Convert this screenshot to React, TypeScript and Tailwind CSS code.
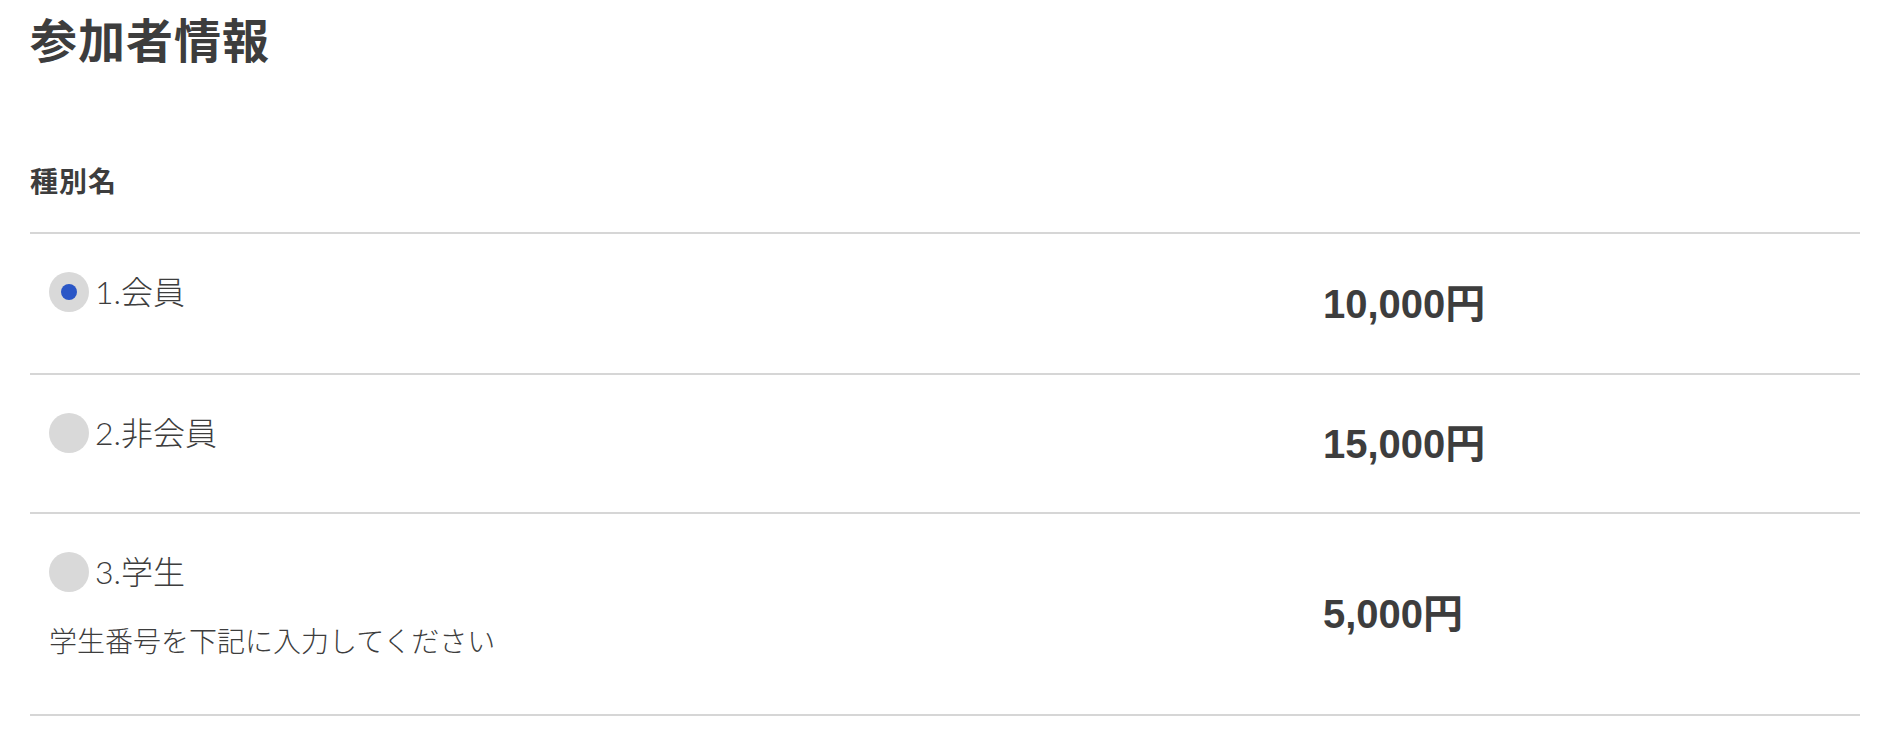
import { useState } from "react";

type Kind = {
  id: number;
  label: string;
  price: string;
  note?: string;
  pb: string;
};

const kinds: Kind[] = [
  { id: 1, label: "1.会員", price: "10,000円", pb: "pb-[61px]" },
  { id: 2, label: "2.非会員", price: "15,000円", pb: "pb-[59px]" },
  { id: 3, label: "3.学生", price: "5,000円", note: "学生番号を下記に入力してください", pb: "pb-[61px]" },
];

const cjk = "font-['Noto_Sans_CJK_JP',sans-serif]";

function Radio({ checked }: { checked: boolean }) {
  return (
    <span className="w-10 h-10 shrink-0 rounded-full bg-[#d9d9d9] flex items-center justify-center">
      {checked && <span className="w-4 h-4 rounded-full bg-[#2a56c6]"></span>}
    </span>
  );
}

export default function App() {
  const [selected, setSelected] = useState(1);

  return (
    <div className={`min-h-screen w-full bg-white text-[#3d3d3d] px-[30px] pt-[9px] ${cjk}`}>
      <h2 className="text-[47px] leading-[58px] font-bold tracking-[1px]">参加者情報</h2>

      <div className="mt-[95px] border-b-2 border-[#d6d6d6] pb-[34px]">
        <span className="text-[28px] leading-[36px] font-bold tracking-[1px]">種別名</span>
      </div>

      {kinds.map(kind => (
        <div
          key={kind.id}
          onClick={() => setSelected(kind.id)}
          className="grid grid-cols-[1293px_1fr] border-b-2 border-[#d6d6d6] cursor-pointer"
        >
          <div className={`pl-[19px] pt-[38px] ${kind.pb}`}>
            <div className="flex items-center gap-[6px]">
              <Radio checked={selected === kind.id} />
              <span className="text-[32px] leading-[40px] font-light font-['Lato','Noto_Sans_CJK_JP',sans-serif]">
                {kind.label}
              </span>
            </div>
            {kind.note && (
              <p className="mt-[33px] -mb-[2px] text-[28px] leading-[30px] font-light">{kind.note}</p>
            )}
          </div>
          <div className="flex items-center">
            <span className="text-[40px] leading-[48px] font-bold font-['Liberation_Sans','Noto_Sans_CJK_JP',sans-serif]">
              {kind.price}
            </span>
          </div>
        </div>
      ))}
    </div>
  );
}
